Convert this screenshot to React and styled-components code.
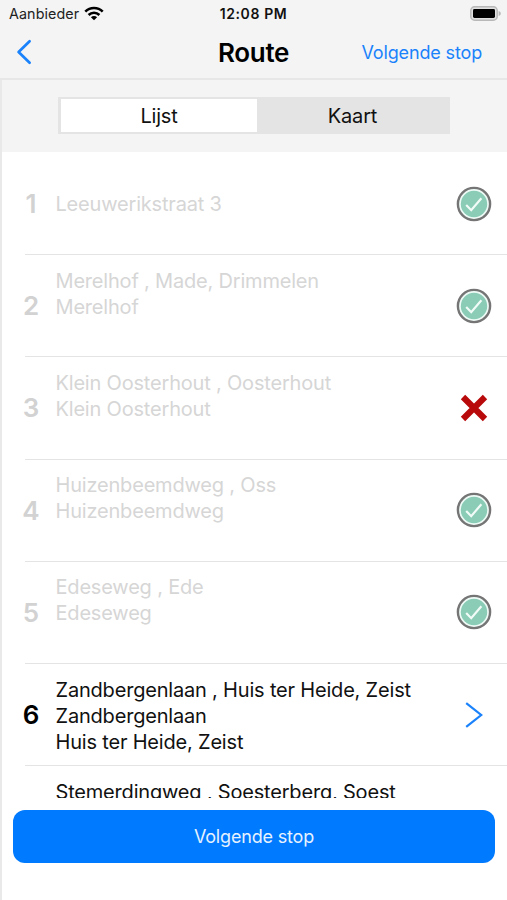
import { useState } from "react";
import styled, { createGlobalStyle } from "styled-components";

const GlobalStyle = createGlobalStyle`
  * {
    box-sizing: border-box;
  }
  body {
    margin: 0;
    background: #fff;
    font-family: Inter, "Liberation Sans", sans-serif;
    overflow: hidden;
  }
  button {
    font-family: inherit;
    border: none;
    padding: 0;
    cursor: pointer;
  }
`;

const Screen = styled.div`
  width: 507px;
  height: 900px;
  display: flex;
  flex-direction: column;
  background: #fff;
  color: #000;
  overflow: hidden;
`;
const Header = styled.header`
  height: 80px;
  flex: none;
  background: #f4f4f4;
  border-bottom: 2px solid #e7e7e7;
`;
const StatusBar = styled.div`
  height: 27px;
  padding: 0 6px 0 9px;
  display: grid;
  grid-template-columns: 1fr auto 1fr;
  align-items: center;
`;
const Carrier = styled.div`
  display: flex;
  align-items: center;
  gap: 5px;
  font-size: 14.3px;
  letter-spacing: 0.1px;
  color: #222;
`;
const Clock = styled.div`
  margin-right: 3px;
  font-size: 14px;
  font-weight: 600;
  letter-spacing: 0.6px;
  color: #111;
`;
const Battery = styled.div`
  display: flex;
  justify-content: flex-end;
`;
const NavBar = styled.nav`
  height: 50px;
  padding: 0 25px 0 16px;
  display: grid;
  grid-template-columns: 1fr auto 1fr;
  align-items: center;
`;
const BackButton = styled.button`
  display: flex;
  justify-self: start;
  background: none;
`;
const Title = styled.h1`
  margin: 0 0 0 9px;
  font-size: 26px;
  font-weight: 600;
  letter-spacing: -0.3px;
`;
const NavAction = styled.button`
  justify-self: end;
  background: none;
  color: #1a82fb;
  font-size: 18px;
  letter-spacing: -0.15px;
`;
const Content = styled.main`
  flex: 1;
  min-height: 0;
  display: flex;
  flex-direction: column;
  border-left: 2px solid #e9e9e9;
`;
const Toolbar = styled.div`
  height: 72px;
  flex: none;
  padding: 17px 57px 0 56px;
  background: #f4f4f4;
`;
const Segmented = styled.div`
  height: 37px;
  display: grid;
  grid-template-columns: 196px 1fr;
  padding: 2px 2px 2px 3px;
  background: #e4e4e4;
`;
const Segment = styled.button`
  padding-top: 1px;
  background: ${(props) => (props.$active ? "#fff" : "transparent")};
  color: #111;
  font-size: 20px;
  letter-spacing: -0.2px;
`;
const List = styled.div`
  height: 646px;
  flex: none;
  padding-top: 1px;
  overflow: hidden;
`;
const Row = styled.div`
  height: 102.2px;
  margin-left: 23px;
  display: flex;
  align-items: center;
  border-bottom: 1px solid #e4e4e4;
  color: ${(props) => (props.$done ? "#d6d6d6" : "#111")};
`;
const Index = styled.div`
  width: 12px;
  display: flex;
  justify-content: center;
  font-size: 26px;
  font-weight: 600;
  color: ${(props) => (props.$done ? "#d2d2d2" : "#000")};
`;
const Address = styled.div`
  flex: 1;
  height: 78px;
  margin-left: 18.5px;
  padding-top: 1px;
  display: flex;
  flex-direction: column;
  justify-content: ${(props) => (props.$centered ? "center" : "flex-start")};
`;
const Line = styled.div`
  font-size: 20px;
  line-height: 26px;
  letter-spacing: -0.19px;
  white-space: pre;
`;
const Status = styled.div`
  width: 36px;
  margin-right: 15px;
  display: flex;
  justify-content: center;
`;
const Footer = styled.footer`
  padding: 12px 12px 0 11px;
`;
const NextButton = styled.button`
  width: 100%;
  height: 53px;
  border-radius: 12px;
  background: #007aff;
  color: #e6f2ff;
  font-size: 18px;
  letter-spacing: -0.17px;
`;

const WifiIcon = () => (
  <svg width="20" height="15" viewBox="0 0 20 15">
    <g fill="none" stroke="#000" strokeWidth="2.6">
      <path d="M1.3 5.6a12.4 12.4 0 0 1 17.4 0" />
      <path d="M4.6 9a7.7 7.7 0 0 1 10.8 0" />
    </g>
    <path d="M10 14.3 6.9 11.2a4.4 4.4 0 0 1 6.2 0z" />
  </svg>
);

const BatteryIcon = () => (
  <svg width="31" height="15" viewBox="0 0 31 15">
    <rect x="0.8" y="0.8" width="26.4" height="13.4" rx="3.8" fill="#e0e0e0" stroke="#b8b8b8" strokeWidth="1.5" />
    <rect x="3" y="3" width="22" height="9" rx="1.4" />
    <path d="M28.6 5c1.6.4 2.2 1.3 2.2 2.5s-.6 2.1-2.2 2.5z" fill="#b8b8b8" />
  </svg>
);

const BackIcon = () => (
  <svg width="16" height="26" viewBox="0 0 16 26">
    <path d="M13.6 2.2 2.6 13l11 10.8" fill="none" stroke="#1a82fb" strokeWidth="2.7" strokeLinecap="round" strokeLinejoin="round" />
  </svg>
);

const CheckIcon = () => (
  <svg width="36" height="36" viewBox="0 0 36 36">
    <circle cx="18" cy="18" r="16.1" fill="#eefaf6" stroke="#757575" strokeWidth="2.4" />
    <circle cx="18" cy="18" r="13.2" fill="#8accb6" />
    <path d="m10.2 19 5 5.2L25.4 12.2" fill="none" stroke="#f1fbf8" strokeWidth="2.2" />
  </svg>
);

const CrossIcon = () => (
  <svg width="28" height="28" viewBox="0 0 28 28">
    <path d="M3 3l22 22M25 3 3 25" fill="none" stroke="#b80a0a" strokeWidth="6.2" />
  </svg>
);

const ChevronIcon = () => (
  <svg width="20" height="28" viewBox="0 0 20 28">
    <path d="M2.2 2.2 17.2 14 2.2 25.8" fill="none" stroke="#1a82fb" strokeWidth="2.2" />
  </svg>
);

const icons = { done: CheckIcon, failed: CrossIcon, next: ChevronIcon };

const stops = [
  { status: "done", centered: true, lines: ["Leeuwerikstraat 3"] },
  { status: "done", lines: ["Merelhof , Made, Drimmelen", "Merelhof"] },
  { status: "failed", lines: ["Klein Oosterhout , Oosterhout", "Klein Oosterhout"] },
  { status: "done", lines: ["Huizenbeemdweg , Oss", "Huizenbeemdweg"] },
  { status: "done", lines: ["Edeseweg , Ede", "Edeseweg"] },
  { status: "next", lines: ["Zandbergenlaan , Huis ter Heide, Zeist", "Zandbergenlaan", "Huis ter Heide, Zeist"] },
  { status: "upcoming", lines: ["Stemerdingweg , Soesterberg, Soest"] },
];

const Stop = ({ stop, number }) => {
  const done = stop.status === "done" || stop.status === "failed";
  const Icon = icons[stop.status];
  return (
    <Row $done={done}>
      <Index $done={done}>{stop.status !== "upcoming" && number}</Index>
      <Address $centered={stop.centered}>
        {stop.lines.map((line) => (
          <Line key={line}>{line}</Line>
        ))}
      </Address>
      <Status>{Icon && <Icon />}</Status>
    </Row>
  );
};

const App = () => {
  const [tab, setTab] = useState("Lijst");

  return (
    <Screen>
      <GlobalStyle />
      <Header>
        <StatusBar>
          <Carrier>
            Aanbieder <WifiIcon />
          </Carrier>
          <Clock>12:08 PM</Clock>
          <Battery>
            <BatteryIcon />
          </Battery>
        </StatusBar>
        <NavBar>
          <BackButton>
            <BackIcon />
          </BackButton>
          <Title>Route</Title>
          <NavAction>Volgende stop</NavAction>
        </NavBar>
      </Header>
      <Content>
        <Toolbar>
          <Segmented>
            {["Lijst", "Kaart"].map((name) => (
              <Segment key={name} $active={tab === name} onClick={() => setTab(name)}>
                {name}
              </Segment>
            ))}
          </Segmented>
        </Toolbar>
        <List>
          {stops.map((stop, i) => (
            <Stop key={i} stop={stop} number={i + 1} />
          ))}
        </List>
        <Footer>
          <NextButton>Volgende stop</NextButton>
        </Footer>
      </Content>
    </Screen>
  );
};

export default App;
